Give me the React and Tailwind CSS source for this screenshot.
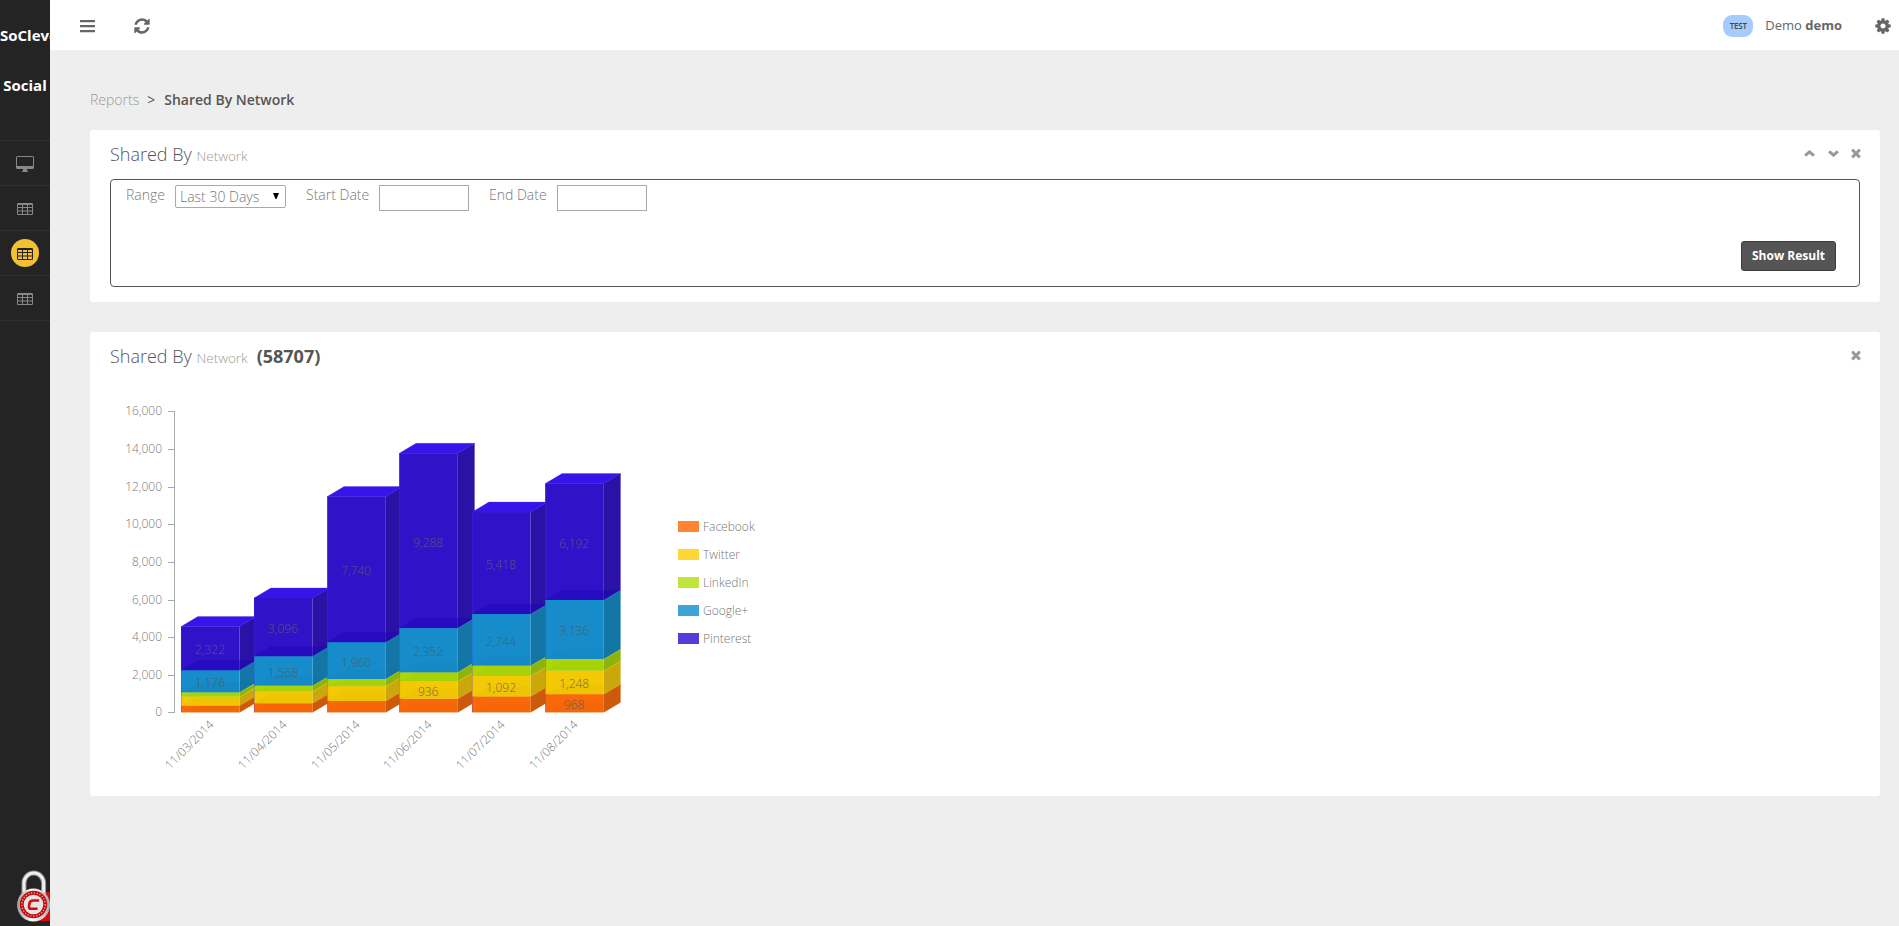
const FA = {
  refresh: "M1639 1056q0 5-1 7-64 268-268 434.500t-478 166.500q-146 0-282.500-55t-243.500-157l-129 129q-19 19-45 19t-45-19-19-45v-448q0-26 19-45t45-19h448q26 0 45 19t19 45-19 45l-137 137q71 66 161 102t187 36q134 0 250-65t186-179q11-17 53-117 8-23 30-23h192q13 0 22.500 9.500t9.500 22.500zm25-800v448q0 26-19 45t-45 19h-448q-26 0-45-19t-19-45 19-45l138-138q-148-137-349-137-134 0-250 65t-186 179q-11 17-53 117-8 23-30 23h-199q-13 0-22.500-9.500t-9.500-22.500v-7q65-268 270-434.500t480-166.500q146 0 284 55.500t245 156.500l130-129q19-19 45-19t45 19 19 45z",
  cog: "M1152 896q0-106-75-181t-181-75-181 75-75 181 75 181 181 75 181-75 75-181zm512-109v222q0 12-8 23t-20 13l-185 28q-19 54-39 91 35 50 107 138 10 12 10 25t-9 23q-27 37-99 108t-94 71q-12 0-26-9l-138-108q-44 23-91 38-16 136-29 186-7 28-36 28h-222q-14 0-24.500-8.500t-11.500-21.500l-28-184q-49-16-90-37l-141 107q-10 9-25 9-14 0-25-11-126-114-165-168-7-10-7-23 0-12 8-23 15-21 51-66.500t54-70.500q-27-50-41-99l-183-27q-13-2-21-12.500t-8-23.500v-222q0-12 8-23t19-13l186-28q14-46 39-92-40-57-107-138-10-12-10-24 0-10 9-23 26-36 98.500-107.500t94.500-71.500q13 0 26 10l138 107q44-23 91-38 16-136 29-186 7-28 36-28h222q14 0 24.500 8.500t11.500 21.500l28 184q49 16 90 37l142-107q9-9 24-9 13 0 25 10 129 119 165 170 7 8 7 22 0 12-8 23-15 21-51 66.500t-54 70.500q26 50 41 98l183 28q13 2 21 12.500t8 23.500z",
  times: "M1490 1322q0 40-28 68l-136 136q-28 28-68 28t-68-28l-294-294-294 294q-28 28-68 28t-68-28l-136-136q-28-28-28-68t28-68l294-294-294-294q-28-28-28-68t28-68l136-136q28-28 68-28t68 28l294 294 294-294q28-28 68-28t68 28l136 136q28 28 28 68t-28 68l-294 294 294 294q28 28 28 68z",
};

function Icon({ name, className }) {
  return (
    <svg viewBox="0 0 1792 1792" fill="currentColor" className={className}>
      <path d={FA[name]} />
    </svg>
  );
}

function BarsIcon() {
  return (
    <svg viewBox="0 0 18 18" className="size-[18px]">
      <path d="M2 4.200H17M2 9.200H17M2 14.200H17" stroke="currentColor" strokeWidth="2.200" />
    </svg>
  );
}

function Chevron({ className }) {
  return (
    <svg viewBox="0 0 11 7" className={className}>
      <path d="M1.100 5.700 5.500 1.900 9.900 5.700" fill="none" stroke="currentColor" strokeWidth="3" />
    </svg>
  );
}

function TableIcon() {
  return (
    <svg viewBox="0 0 16 12" className="mt-px h-3 w-4">
      <path
        fill="currentColor"
        fillRule="evenodd"
        d="M1.200 0H14.800Q16 0 16 1.200V10.800Q16 12 14.800 12H1.200Q0 12 0 10.800V1.200Q0 0 1.200 0ZM1 2H5V4H1ZM6 2H10V4H6ZM11 2H15V4H11ZM1 5H5V7.500H1ZM6 5H10V7.500H6ZM11 5H15V7.500H11ZM1 8.500H5V11H1ZM6 8.500H10V11H6ZM11 8.500H15V11H11Z"
      />
    </svg>
  );
}

function DesktopIcon() {
  return (
    <svg viewBox="0 0 18 16" className="mt-0.5 h-4 w-[18px]">
      <path
        fill="currentColor"
        fillRule="evenodd"
        d="M1.500 0H16.500Q18 0 18 1.500V11.500Q18 13 16.500 13H11V14.500L12 15.200V16H6V15.200L7 14.500V13H1.500Q0 13 0 11.500V1.500Q0 0 1.500 0ZM1 1V10H17V1Z"
      />
    </svg>
  );
}

const BASE = 380.4;
const SCALE = 301 / 16000;
const SERIES = [
  { name: "Facebook", front: "#f9690a", side: "#cd5a0c", legend: "#ff8533" },
  { name: "Twitter", front: "#f3c905", side: "#caa80c", legend: "#fdd835" },
  { name: "LinkedIn", front: "#abd709", side: "#8fb30d", legend: "#c0e63a" },
  { name: "Google+", front: "#168dca", side: "#1476a6", legend: "#3da4da" },
  { name: "Pinterest", front: "#3013c9", side: "#2a12a6", legend: "#553ddb" },
];
const DAYS = [
  { date: "11/03/2014", x: 91, values: [363, 468, 234, 1176, 2322] },
  { date: "11/04/2014", x: 164, values: [484, 624, 312, 1568, 3096] },
  { date: "11/05/2014", x: 237.2, values: [605, 780, 390, 1960, 7740] },
  { date: "11/06/2014", x: 309.2, values: [726, 936, 468, 2352, 9288] },
  { date: "11/07/2014", x: 382, values: [847, 1092, 546, 2744, 5418] },
  { date: "11/08/2014", x: 455.2, values: [968, 1248, 624, 3136, 6192] },
];
const W = 58.6;
const DX = 16.8;
const DY = 10;

function Column({ day }) {
  let total = 0;
  const parts = day.values.map((value, i) => {
    const bottom = BASE - total * SCALE;
    total += value;
    return { value, bottom, top: BASE - total * SCALE, ...SERIES[i] };
  });
  const { x } = day;
  const top = BASE - total * SCALE;
  return (
    <g>
      {parts.map((p, i) => (
        <g key={p.name}>
          <path d={`M${x + W} ${p.bottom}l${DX} ${-DY}V${p.top - DY}l${-DX} ${DY}Z`} fill={p.side} />
          <rect x={x} y={p.top} width={W} height={p.bottom - p.top} fill={p.front} />
          <path
            d={`M${x} ${p.bottom}l${DX} ${-Math.min(DY, p.bottom - p.top)}H${x + W + DX}L${x + W} ${p.bottom}Z`}
            fill={i === 4 ? "#1a00b4" : p.side}
            opacity={i === 4 ? 0.4 : 0.12}
          />
          <path d={`M${x} ${p.top + 0.3}H${x + W}l${DX} ${-DY}`} fill="none" stroke={p.front} strokeWidth="0.8" />
        </g>
      ))}
      <path d={`M${x} ${top}l${DX} ${-DY}h${W}l${-DX} ${DY}Z`} fill="#3614ea" />
      <path d={`M${x + 0.4} ${BASE}V${top}l${DX} ${-DY}h${W}`} fill="none" stroke="#4a35dc" strokeWidth="0.5" opacity="0.6" />
      {parts.map((p, i) =>
        p.value >= 936 ? (
          <text
            key={p.name}
            x={x + W / 2 - 0.3}
            y={(p.top + p.bottom) / 2 + 6}
            textAnchor="middle"
            fontSize="12"
            fill={i === 4 ? "#666" : "#555"}
            opacity="0.8"
          >
            {p.value.toLocaleString("en-US")}
          </text>
        ) : null
      )}
    </g>
  );
}

function Chart() {
  const ticks = [0, 2000, 4000, 6000, 8000, 10000, 12000, 14000, 16000];
  return (
    <svg width="700" height="464" viewBox="0 0 700 464" className="block font-light" fill="#777">
      {ticks.map((t) => {
        const y = Math.round(BASE - t * SCALE) + 0.5;
        return (
          <g key={t}>
            <path d={`M78 ${y}H84.500`} stroke="#aaa" />
            <text x="72" y={y + 3.5} textAnchor="end" fontSize="12">
              {t.toLocaleString("en-US")}
            </text>
          </g>
        );
      })}
      <path d="M84.500 79V381" stroke="#aaa" />
      {DAYS.map((d) => (
        <Column key={d.date} day={d} />
      ))}
      {DAYS.map((d) => (
        <text key={d.date} textAnchor="end" fontSize="12" transform={`translate(${d.x + 33.5} ${BASE + 13}) rotate(-45)`}>
          {d.date}
        </text>
      ))}
      {SERIES.map((s, i) => (
        <g key={s.name}>
          <rect x="588" y={189 + i * 28} width="21" height="11" fill={s.legend} />
          <text x="613" y={199.4 + i * 28} fontSize="12">
            {s.name}
          </text>
        </g>
      ))}
    </svg>
  );
}

function Padlock() {
  return (
    <svg viewBox="0 0 34 56" className="absolute bottom-0 left-4 h-14 w-[34px]">
      <defs>
        <linearGradient id="steel" x1="0" x2="1">
          <stop offset="0" stopColor="#999" />
          <stop offset="0.45" stopColor="#fff" />
          <stop offset="1" stopColor="#aaa" />
        </linearGradient>
      </defs>
      <path d="M22 22H34V51H22Z" fill="#d40a0c" />
      <path d="M8 24V13a9.800 10 0 0 1 19.600 0V24" fill="none" stroke="#8d8d8d" strokeWidth="5" />
      <path d="M8 24V13a9.800 10 0 0 1 19.600 0V24" fill="none" stroke="#eee" strokeWidth="3" />
      <circle cx="17.500" cy="35" r="16.500" fill="url(#steel)" />
      <circle cx="17.500" cy="34.500" r="13.700" fill="#c20e12" />
      <circle cx="17.500" cy="34.500" r="11.700" fill="none" stroke="#f4b5b5" strokeWidth="1.200" strokeDasharray="1.200 1.700" />
      <circle cx="17.500" cy="34.500" r="9.800" fill="#e4e4e4" />
      <path d="M23.200 30.500H17Q14 30.500 13.500 33.300L13 36Q12.600 38.800 15.200 38.800H21.500" fill="none" stroke="#d4090d" strokeWidth="2.600" />
    </svg>
  );
}

function NavItem({ active, children }) {
  return (
    <a className="flex h-[45px] items-center justify-center border-t border-[#303030]">
      <span className={active ? "flex size-7 items-center justify-center rounded-full bg-[#f3bf35] text-[#242424]" : "flex size-7 items-center justify-center text-[#888]"}>
        {children}
      </span>
    </a>
  );
}

function Title({ children }) {
  return (
    <h4 className="h-6 text-lg leading-6 font-light text-[#555]">
      Shared By <small className="text-[13.5px] text-[#999]">Network</small>
      {children}
    </h4>
  );
}

export default function App() {
  return (
    <div className="flex h-[926px] w-full overflow-hidden bg-[#eeeeee] font-['Open_Sans',sans-serif] text-sm text-[#555]">
      <aside className="relative w-[50px] shrink-0 overflow-hidden bg-[#242424]">
        <div className="flex h-[140px] flex-col pt-[10px] text-[15px] font-bold text-white">
          <span className="h-[50px] leading-[50px]">SoClever</span>
          <span className="h-[50px] text-center leading-[50px]">Social</span>
        </div>
        <nav className="border-b border-[#303030]">
          <NavItem>
            <DesktopIcon />
          </NavItem>
          <NavItem>
            <TableIcon />
          </NavItem>
          <NavItem active>
            <TableIcon />
          </NavItem>
          <NavItem>
            <TableIcon />
          </NavItem>
        </nav>
        <Padlock />
      </aside>

      <div className="flex min-w-0 flex-1 flex-col">
        <header className="flex h-[50px] shrink-0 items-center bg-white pt-px pr-[7px] pl-[28px] text-[#666]">
          <BarsIcon />
          <Icon name="refresh" className="ml-[37px] size-[18px]" />
          <div className="ml-auto flex items-center">
            <span className="flex h-[22px] w-[30px] items-center justify-center rounded-[9px] bg-[#a6ccff] text-[8px] font-semibold tracking-tight text-[#444]">TEST</span>
            <span className="ml-3 text-[13px]">
              Demo <b>demo</b>
            </span>
            <Icon name="cog" className="ml-8 size-[18px]" />
          </div>
        </header>

        <main className="pr-[19px] pl-10">
          <div className="mt-10 flex h-5 items-center text-sm">
            <span className="font-light text-[#999]">Reports</span>
            <span className="ml-2">&gt;</span>
            <span className="ml-[9px] font-semibold">Shared By Network</span>
          </div>

          <section className="mt-5 h-[172px] rounded-[3px] bg-white px-5 pt-3">
            <div className="flex h-6 justify-between">
              <Title />
              <div className="-mr-[3px] flex h-[22px] items-center text-[#999]">
                <Chevron className="h-[7px] w-[11px]" />
                <Chevron className="ml-[13px] h-[7px] w-[11px] rotate-180" />
                <Icon name="times" className="ml-[10px] size-[14px]" />
              </div>
            </div>
            <div className="mt-[13px] flex h-[108px] flex-col justify-between rounded border border-[#555] pr-[23px] pl-[15px]">
              <div className="flex items-start pt-[5px] font-light text-[#777]">
                <span className="w-[49px] leading-5">Range</span>
                <span className="flex h-[23px] w-[111px] items-center justify-between rounded-[2px] border border-[#a9a9a9] pr-1.5 pl-1">
                  Last 30 Days
                  <svg viewBox="0 0 6 6" className="-mt-0.5 h-1.5 w-1.5">
                    <path d="M0 0H6L3.500 6H2.500Z" fill="#000" />
                  </svg>
                </span>
                <span className="ml-5 w-[73px] leading-5">Start Date</span>
                <input className="h-[26px] w-[90px] border border-[#a9a9a9]" />
                <span className="ml-5 w-[68px] leading-5">End Date</span>
                <input className="h-[26px] w-[90px] border border-[#a9a9a9]" />
              </div>
              <button className="mb-[15px] h-[30px] w-[95px] self-end rounded-[3px] border border-[#3c3c3c] bg-[#555] text-xs font-bold text-white">Show Result</button>
            </div>
          </section>

          <section className="mt-[30px] h-[464px] rounded-[3px] bg-white px-5 pt-3">
            <div className="flex h-6 justify-between">
              <Title>
                <b className="ml-[9px] font-bold">(58707)</b>
              </Title>
              <Icon name="times" className="mt-1 -mr-[3px] size-[14px] text-[#999]" />
            </div>
            <div className="-mt-9 -ml-5 h-[464px]">
              <Chart />
            </div>
          </section>
        </main>
      </div>
    </div>
  );
}
